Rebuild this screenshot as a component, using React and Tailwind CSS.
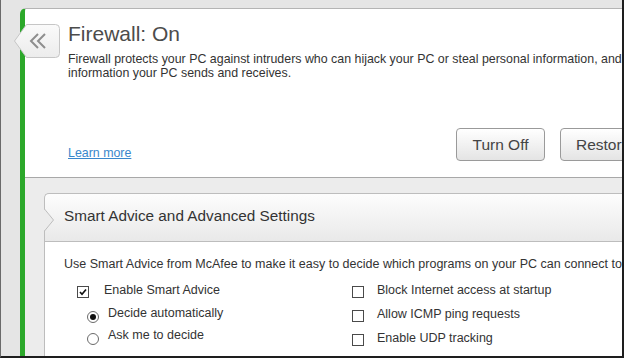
const font = "font-['Liberation_Sans',Arial,sans-serif]";

function Checkbox({ checked }) {
  return (
    <div className="mt-[3px] w-[12px] h-[12px] border border-[#4a4a4a] bg-white flex items-center justify-center shrink-0">
      {checked && (
        <svg width="10" height="10" viewBox="0 0 10 10">
          <path d="M2 5 L4 7.2 L8 2.5" fill="none" stroke="#111" strokeWidth="1.7" />
        </svg>
      )}
    </div>
  );
}

function Radio({ checked }) {
  return (
    <div className="mt-[7px] w-[12px] h-[12px] rounded-full border border-[#6a6a6a] bg-white flex items-center justify-center shrink-0">
      {checked && <div className="w-[6px] h-[6px] rounded-full bg-[#111]" />}
    </div>
  );
}

export default function App() {
  return (
    <div
      className={`w-[624px] h-[358px] overflow-hidden bg-[#e5e5e5] border-l border-r-2 border-b-2 border-l-[#6a6a6a] border-r-[#1e1e1e] border-b-[#1e1e1e] flex relative ${font}`}
    >
      <div className="w-[19px] shrink-0" />
      <div className="w-[760px] shrink-0 mt-[8px] flex flex-col rounded-tl-[6px] border-l-[5px] border-t border-l-[#2ca82a] border-t-[#b4b4b4] overflow-hidden">
        {/* Top panel */}
        <div className="h-[169px] bg-white border-b border-[#a8a8a8] flex flex-col pl-[43px] pt-[13px] pb-[16px]">
          <div className="text-[21px] leading-[24px] text-[#4c4c4c]">Firewall: On</div>
          <div className="mt-[6px] text-[12.4px] leading-[14px] text-[#333] whitespace-nowrap">
            Firewall protects your PC against intruders who can hijack your PC or steal personal information, and
            <br />
            information your PC sends and receives.
          </div>
          <div className="flex-1" />
          <div className="w-[622px] flex items-end justify-between">
            <a className="mb-[1px] text-[12.4px] leading-[14px] text-[#3a87cc] underline">Learn more</a>
            <div className="flex gap-[15px]">
              <button className="w-[89px] h-[33px] rounded-[4px] border border-[#9a9a9a] bg-gradient-to-b from-white to-[#e4e4e4] text-[15.5px] text-[#444]">
                Turn Off
              </button>
              <button className="w-[130px] h-[33px] rounded-[4px] border border-[#9a9a9a] bg-gradient-to-b from-white to-[#e4e4e4] text-[15.5px] text-[#444] text-left pl-[15px] whitespace-nowrap">
                Restore Defaults
              </button>
            </div>
          </div>
        </div>

        {/* Gray area */}
        <div className="flex-1 bg-[#ececec] pl-[19px] pt-[15px] flex flex-col">
          <div className="flex-1 flex flex-col">
            <div className="relative h-[49px] border border-r-0 border-[#bdbdbd] rounded-tl-[5px] bg-gradient-to-b from-[#fdfdfd] to-[#e9e9e9] flex items-center pl-[19px] pb-[2px]">
              <span className="text-[15.3px] text-[#333]">Smart Advice and Advanced Settings</span>
              <svg className="absolute left-[-1px] top-[15px]" width="12" height="23" viewBox="0 0 12 23">
                <polygon points="0,0 9.5,11 0,22" fill="#ececec" />
                <polyline points="0.5,0 9.5,11 0.5,22" fill="none" stroke="#bdbdbd" strokeWidth="1" />
              </svg>
            </div>
            <div className="flex-1 bg-white border-l border-[#bdbdbd] pl-[19px] pt-[15px]">
              <div className="text-[12.5px] leading-[15px] text-[#333] whitespace-nowrap">
                Use Smart Advice from McAfee to make it easy to decide which programs on your PC can connect to the Internet.
              </div>
              <div className="mt-[7px] ml-[13px] grid grid-cols-[275px_1fr] text-[12.5px] text-[#333]">
                <div className="flex flex-col">
                  <div className="h-[23px] flex items-center gap-[15px]">
                    <Checkbox checked />
                    <span>Enable Smart Advice</span>
                  </div>
                  <div className="h-[22px] flex items-center gap-[9px] pl-[10px]">
                    <Radio checked />
                    <span>Decide automatically</span>
                  </div>
                  <div className="h-[22px] flex items-center gap-[9px] pl-[10px]">
                    <Radio />
                    <span>Ask me to decide</span>
                  </div>
                </div>
                <div className="flex flex-col">
                  <div className="h-[23px] flex items-center gap-[13px]">
                    <Checkbox />
                    <span>Block Internet access at startup</span>
                  </div>
                  <div className="h-[24px] flex items-center gap-[13px]">
                    <Checkbox />
                    <span>Allow ICMP ping requests</span>
                  </div>
                  <div className="h-[24px] flex items-center gap-[13px]">
                    <Checkbox />
                    <span>Enable UDP tracking</span>
                  </div>
                </div>
              </div>
            </div>
          </div>
        </div>
      </div>

      {/* Back tab overlay */}
      <svg className="absolute left-[12px] top-[23px]" width="48" height="36" viewBox="0 0 48 36">
        <defs>
          <linearGradient id="tabg" x1="0" y1="0" x2="0" y2="1">
            <stop offset="0" stopColor="#fafafa" />
            <stop offset="1" stopColor="#ececec" />
          </linearGradient>
        </defs>
        <path d="M13.5 1.5 H42.5 Q46.5 1.5 46.5 5.5 V30.5 Q46.5 34.5 42.5 34.5 H13.5 L1.5 18 Z" fill="url(#tabg)" stroke="#c6c6c6" strokeWidth="1" />
        <path d="M25 11 L18 18 L25 25" fill="none" stroke="#8e8e8e" strokeWidth="2" />
        <path d="M32 11 L25 18 L32 25" fill="none" stroke="#8e8e8e" strokeWidth="2" />
      </svg>
    </div>
  );
}
